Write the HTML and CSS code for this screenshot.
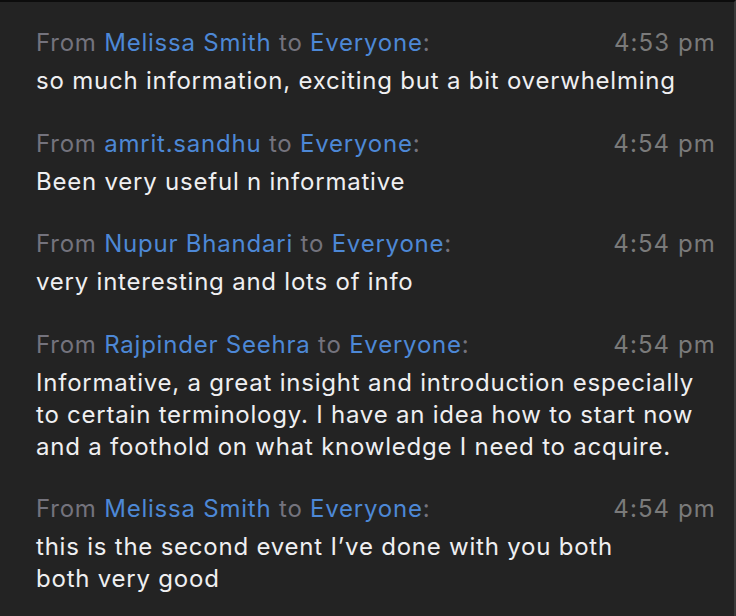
FILE: index.html
```html
<!DOCTYPE html>
<html lang="en">
<head>
<meta charset="utf-8">
<title>Chat</title>
<link rel="stylesheet" href="styles.css">
</head>
<body>
<div class="chat">
  <div class="msg">
    <div class="head"><span class="meta">From <span class="name">Melissa Smith</span> to <span class="name">Everyone</span>:</span><span class="time">4:53 pm</span></div>
    <div class="text">so much information, exciting but a bit overwhelming</div>
  </div>
  <div class="msg">
    <div class="head"><span class="meta">From <span class="name">amrit.sandhu</span> to <span class="name">Everyone</span>:</span><span class="time">4:54 pm</span></div>
    <div class="text">Been very useful n informative</div>
  </div>
  <div class="msg">
    <div class="head"><span class="meta">From <span class="name">Nupur Bhandari</span> to <span class="name">Everyone</span>:</span><span class="time">4:54 pm</span></div>
    <div class="text">very interesting and lots of info</div>
  </div>
  <div class="msg">
    <div class="head"><span class="meta">From <span class="name">Rajpinder Seehra</span> to <span class="name">Everyone</span>:</span><span class="time">4:54 pm</span></div>
    <div class="text">Informative, a great insight and introduction especially to certain terminology. I have an idea how to start now and a foothold on what knowledge I need to acquire.</div>
  </div>
  <div class="msg">
    <div class="head"><span class="meta">From <span class="name">Melissa Smith</span> to <span class="name">Everyone</span>:</span><span class="time">4:54 pm</span></div>
    <div class="text">this is the second event I’ve done with you both<br>both very good</div>
  </div>
</div>
</body>
</html>
```
FILE: styles.css
```css
html, body {
  margin: 0;
  padding: 0;
  background: #232323;
}
body {
  width: 736px;
  height: 616px;
  overflow: hidden;
  font-family: "Inter", "Liberation Sans", sans-serif;
}
.chat {
  box-sizing: border-box;
  width: 736px;
  height: 616px;
  border-top: 2px solid #0c0c0c;
  border-right: 2px solid #3a3a3a;
  padding: 25px 18px 0 36px;
  display: flex;
  flex-direction: column;
  gap: 30.5px;
  letter-spacing: 0.78px;
}
.msg {
  display: flex;
  flex-direction: column;
  gap: 7px;
}
.head {
  display: flex;
  justify-content: space-between;
  align-items: baseline;
  font-size: 24px;
  line-height: 31px;
}
.meta {
  color: #74737d;
}
.name {
  color: #4d88d6;
}
.time {
  color: #7a7a7a;
  letter-spacing: 1.1px;
}
.text {
  color: #efeff1;
  font-size: 24px;
  line-height: 32px;
}
```
